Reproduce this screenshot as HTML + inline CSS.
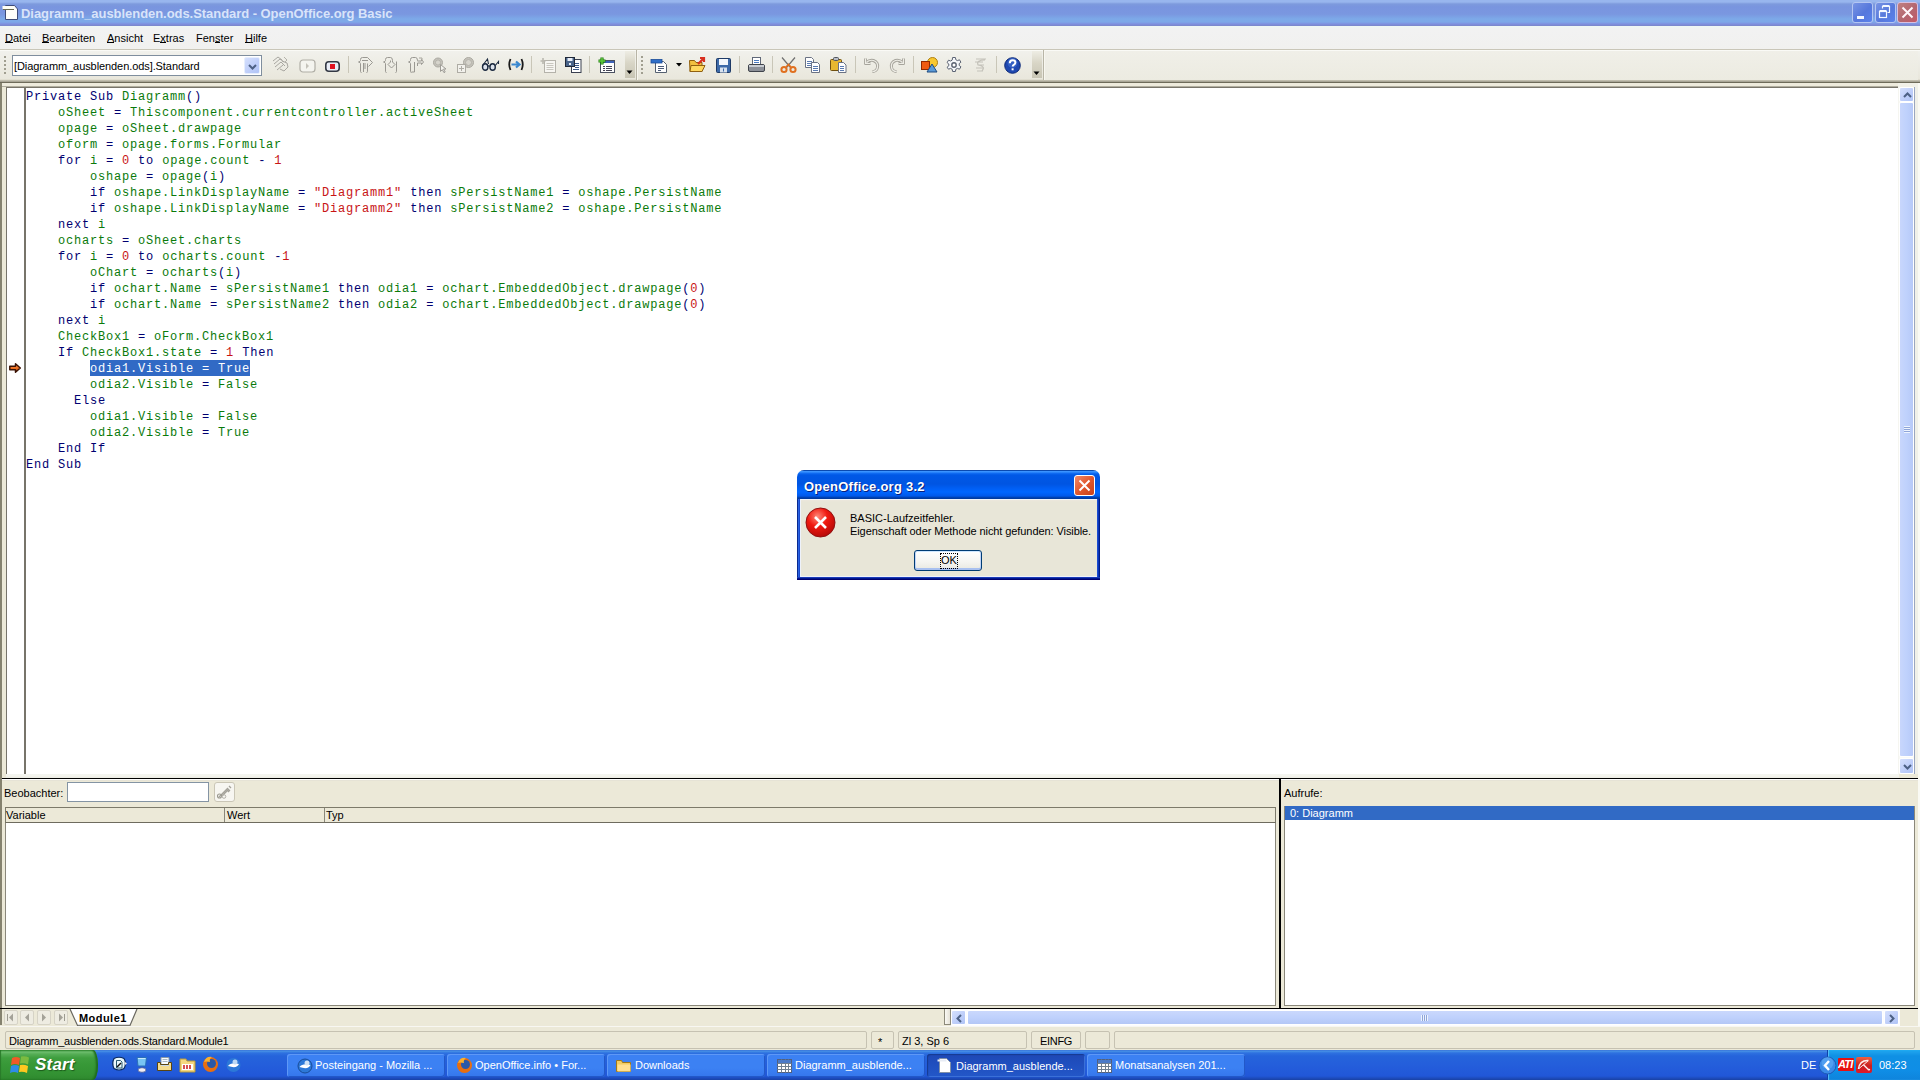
<!DOCTYPE html>
<html><head><meta charset="utf-8"><style>
*{margin:0;padding:0;box-sizing:border-box}
html,body{width:1920px;height:1080px;overflow:hidden}
body{position:relative;background:#ECE9D8;font-family:"Liberation Sans",sans-serif;font-size:11px;color:#000}
.a{position:absolute}
.t{position:absolute;white-space:pre;line-height:13px}
svg{position:absolute;overflow:visible}
u{text-decoration:none;position:relative}u::after{content:"";position:absolute;left:0;right:0;bottom:1px;height:1px;background:#000}
/* title bar */
#title{left:0;top:0;width:1920px;height:26px;background:linear-gradient(#98B6EE 0px,#98B6EE 2px,#7D9ADD 4px,#7995DF 7px,#7A97E0 14px,#7DA9E8 19px,#7DA8E8 22px,#7F90E0 24px,#7B86C8 26px)}
.wb{top:2px;width:21px;height:21px;border:1px solid #B4C6F2;border-radius:3px;background:linear-gradient(135deg,#7894E4,#5678DC 55%,#5A82EC)}
#menu{left:0;top:26px;width:1920px;height:24px;background:linear-gradient(#EEF8F4 0px,#F2F2F2 3px,#F1F1EF 23px);border-bottom:1px solid #C9C6B8}
#tb{left:0;top:50px;width:1920px;height:33px;background:linear-gradient(#FAFAF6 0px,#FAFAF6 1px,#F1F1EC 1px,#EDECE4 15px,#E9E7DC 29px,#D8D5C5 30px,#A9A697 31px,#A9A697 32px);border-bottom:1px solid #6E6B5A}
/* editor */
#ed{left:0;top:83px;width:1920px;height:695px;background:linear-gradient(#EEEBDD 3px,#B0AD9E 3px,#B0AD9E 4px,#ECE9D8 4px);border-left:2px solid #85826F}
#gut{left:6px;top:87px;width:20px;height:687px;background:#fff;border:1px solid #77746A;border-right:2px solid #77746A;border-bottom:none}
#code{left:26px;top:87px;width:1872px;height:687px;background:#fff;border-top:1px solid #77746A}
.code{font-family:"Liberation Mono",monospace;font-size:12px;letter-spacing:0.8px;line-height:16px;white-space:pre;position:absolute;left:26px;top:89px;color:#0A7A0A}
.k{color:#000070}.n{color:#C81414}
.hl{background:#316AC5;color:#fff;display:inline-block;height:16px;vertical-align:top;margin-top:-1px;padding-top:1px}
/* scrollbars */
.sbtn{border:1px solid #fff;border-radius:2px;background:linear-gradient(135deg,#D5E0FD,#BDCDF9 60%,#B0C4F6)}
.thumb{border:1px solid #fff;border-radius:2px;background:linear-gradient(90deg,#C8D6FC,#BFD1FC 50%,#B7C9F7)}
#hline1{left:0;top:778px;width:1918px;height:1px;background:#000}
#vline{left:1279px;top:778px;width:2px;height:231px;background:#000}
#hline2{left:0;top:1008px;width:1918px;height:1px;background:#000}
.hdr{background:#ECE9D8;border:1px solid #7D7A6A;border-bottom-color:#6E6B5E}
.sf{top:1031px;height:18px;border:1px solid #C6C2B2;border-radius:2px;background:#ECE9D8}
#taskbar{left:0;top:1050px;width:1920px;height:30px;background:linear-gradient(#3168D5 0px,#4993E6 1px,#2E71E0 3px,#2564DB 6px,#245EDB 15px,#2157D8 26px,#1941A5 30px)}
.tk{top:1054px;width:158px;height:23px;border-radius:3px;background:linear-gradient(#3C81F3,#3C81F3 60%,#3576EC);box-shadow:inset 1px 1px 0 #5E98F7,inset -1px -1px 0 #2258C8}
.tkt{color:#fff;top:1059px}
</style></head><body>
<!-- TITLE -->
<div id="title" class="a"></div>
<svg style="left:2px;top:4px" width="17" height="17" viewBox="0 0 17 17"><path d="M3.5 1.5h9l3 3.5v10.5h-12z" fill="#FEFEFA" stroke="#3E4C78" stroke-width="1"/><rect x="0.5" y="2" width="11" height="3" fill="#FFFFF4"/><path d="M1 5.5h11" stroke="#6A6A50" stroke-width="1"/></svg>
<div class="t" style="left:21px;top:6px;font-weight:bold;font-size:13px;line-height:16px;color:#D8E4FA;letter-spacing:-0.05px">Diagramm_ausblenden.ods.Standard - OpenOffice.org Basic</div>
<div class="a wb" style="left:1852px"><div class="a" style="left:4px;top:13px;width:7px;height:3px;background:#F4F8FF"></div></div>
<div class="a wb" style="left:1875px"><svg style="left:0;top:0" width="19" height="19"><path d="M6.5 5.5v-2h7v6h-2" stroke="#F4F8FF" stroke-width="1.2" fill="none"/><path d="M6.5 3h7" stroke="#F4F8FF" stroke-width="2"/><rect x="3.5" y="8.5" width="7" height="6" stroke="#F4F8FF" stroke-width="1.2" fill="none"/><path d="M3.5 8h7" stroke="#F4F8FF" stroke-width="2"/></svg></div>
<div class="a wb" style="left:1897px;background:linear-gradient(135deg,#C08080,#B46670 55%,#C45A68);border-color:#D8C0E0"><svg style="left:0;top:0" width="19" height="19"><path d="M4.5 4.5l10 10M14.5 4.5l-10 10" stroke="#FFF4F8" stroke-width="2"/></svg></div>

<!-- MENU -->
<div id="menu" class="a"></div>
<div class="t" style="left:5px;top:32px"><u>D</u>atei</div>
<div class="t" style="left:42px;top:32px"><u>B</u>earbeiten</div>
<div class="t" style="left:107px;top:32px"><u>A</u>nsicht</div>
<div class="t" style="left:153px;top:32px">E<u>x</u>tras</div>
<div class="t" style="left:196px;top:32px">Fen<u>s</u>ter</div>
<div class="t" style="left:245px;top:32px"><u>H</u>ilfe</div>

<!-- TOOLBAR -->
<div id="tb" class="a"></div>
<!-- grip 1 -->
<div class="a" style="left:4px;top:56px;width:2px;height:19px;background:repeating-linear-gradient(#A09E90 0 2px,transparent 2px 4px)"></div>
<!-- combobox -->
<div class="a" style="left:12px;top:55px;width:250px;height:21px;background:#fff;border:1px solid #7F8E9E"></div>
<div class="t" style="left:14px;top:60px;letter-spacing:-0.08px">[Diagramm_ausblenden.ods].Standard</div>
<div class="a sbtn" style="left:244px;top:57px;width:16px;height:17px;border-color:#E6EEFD"><svg style="left:3px;top:6px" width="9" height="6"><path d="M1 1L4.5 4.5L8 1" stroke="#4D6185" stroke-width="2" fill="none"/></svg></div>
<!-- compile disabled -->
<svg style="left:272px;top:56px" width="18" height="16" viewBox="0 0 18 16"><path d="M1 5l5-4 4 3M2 8l6-5 4 3M3 11l6-5 4 4M5 14l6-5M10 5l5 2 1 4-4 4-4-2" stroke="#A8A6A0" stroke-width="1" fill="none"/><path d="M12 1l3 3-2 2" stroke="#B4B2AA" fill="none"/></svg>
<!-- run disabled -->
<svg style="left:299px;top:59px" width="17" height="14" viewBox="0 0 17 14"><rect x="1" y="1" width="15" height="12" rx="3" fill="#F4F4EF" stroke="#B0AEA6" stroke-width="1.2"/><path d="M7 4v6l3-3z" fill="#C4C2BA"/></svg>
<!-- stop -->
<svg style="left:325px;top:61px" width="15" height="11" viewBox="0 0 15 11"><rect x="0.8" y="0.8" width="13.4" height="9.4" rx="3" fill="#E8ECF6" stroke="#333844" stroke-width="1.6"/><rect x="5" y="3" width="5" height="5" fill="#E01020"/></svg>
<div class="a" style="left:348px;top:56px;width:1px;height:17px;background:#C9C6B8"></div>
<!-- step over -->
<svg style="left:357px;top:57px" width="17" height="16" viewBox="0 0 17 16"><path d="M4.5 15.5q-1 0-1-1v-8q0-1-2-1.5q2-.5 2-1.5v-1q0-2 2-2h5l5 5-4 4M5 3.5h6M9.5 15.5q1 0 1-1v-8M6.5 6v9M8 6v6" stroke="#9A9892" stroke-width="1" fill="none"/></svg>
<!-- step into -->
<svg style="left:383px;top:57px" width="15" height="16" viewBox="0 0 15 16"><path d="M3.5 15.5q-1 0-1-1v-8q0-1-2-1.5q2-.5 2-1.5v-1q0-2 2-2h3q2 0 2 3v1.5l2.5 2.5-3.5 3.5-3.5-3.5 2.5-2.5V3.5M12.5 15.5q1 0 1-1v-10" stroke="#9A9892" stroke-width="1" fill="none"/></svg>
<!-- step out -->
<svg style="left:408px;top:57px" width="16" height="16" viewBox="0 0 16 16"><path d="M3.5 15.5q-1 0-1-1v-8q0-1-2-1.5q2-.5 2-1.5v-1q0-2 2-2h3q2 0 2 3v.5h4v-1.5l2 2.5-2 2.5v-1.5h-4M6.5 5v10h-3M9.5 6v3" stroke="#9A9892" stroke-width="1" fill="none"/><path d="M11 1h3v3" stroke="#A8A69E" fill="none"/></svg>
<!-- breakpoint -->
<svg style="left:433px;top:57px" width="16" height="16" viewBox="0 0 16 16"><circle cx="5" cy="5.5" r="4.5" fill="#C6C4BC" stroke="#ABA9A1"/><circle cx="5" cy="5.5" r="2.6" fill="#D6D4CC" stroke="#B4B2AA"/><path d="M7.5 7.5v7l1.8-1.8 1.7 3 1.2-.7-1.7-3h2.5z" fill="#F4F3EE" stroke="#9E9C96" stroke-width="1" stroke-linejoin="round"/></svg>
<!-- manage breakpoints -->
<svg style="left:457px;top:57px" width="17" height="17" viewBox="0 0 17 17"><circle cx="11.5" cy="5.5" r="5" fill="#C6C4BC" stroke="#ABA9A1"/><circle cx="11.5" cy="5.5" r="3" fill="#D6D4CC" stroke="#B4B2AA"/><rect x="0.5" y="7.5" width="8" height="8" fill="#F2F1EC" stroke="#AEACA4"/><path d="M4.5 9v5M2 11.5h5" stroke="#AEACA4"/></svg>
<!-- watch glasses -->
<svg style="left:481px;top:58px" width="18" height="13" viewBox="0 0 18 13"><ellipse cx="4.2" cy="9" rx="2.7" ry="3.2" fill="#DCE2EC" stroke="#1C2A40" stroke-width="1.4"/><ellipse cx="11.6" cy="9" rx="2.7" ry="3.2" fill="#DCE2EC" stroke="#1C2A40" stroke-width="1.4"/><path d="M6.9 8.5q1-1.2 2 0M1.6 7.5L6.5 1l1 5M14.3 7.5L17.5 3.5v2.5" stroke="#1C2A40" stroke-width="1.1" fill="none"/></svg>
<!-- object catalog -->
<svg style="left:507px;top:58px" width="18" height="13" viewBox="0 0 18 13"><path d="M3.5 1Q1 6.5 3.5 12M14.5 1Q17 6.5 14.5 12" stroke="#1A1A1A" stroke-width="1.8" fill="none"/><path d="M4.5 6.5h7M9 3.5l3.5 3-3.5 3" stroke="#3A88D0" stroke-width="2.2" fill="none"/></svg>
<div class="a" style="left:531px;top:56px;width:1px;height:17px;background:#C9C6B8"></div>
<!-- disabled insert doc -->
<svg style="left:540px;top:57px" width="17" height="16" viewBox="0 0 17 16"><rect x="4.5" y="3.5" width="11" height="12" fill="#F7F6F2" stroke="#B4B2AA"/><path d="M6.5 6.5h7M6.5 8.5h7M6.5 10.5h7M6.5 12.5h7" stroke="#C8C6BE"/><path d="M3 1v6M0.5 4h5" stroke="#BAB8B0" stroke-width="1.6"/></svg>
<!-- save module -->
<svg style="left:565px;top:57px" width="17" height="16" viewBox="0 0 17 16"><rect x="6.5" y="2.5" width="9.5" height="13" fill="#fff" stroke="#3A4050"/><path d="M10 6.5h4M10 8.5h4M10 10.5h4M8 12.5h6" stroke="#3A5888"/><rect x="0.5" y="0.5" width="9" height="9" fill="#49648A" stroke="#202838"/><rect x="2.5" y="1" width="5" height="3" fill="#E8EEF8"/><rect x="4" y="6" width="2" height="2" fill="#E8EEF8"/></svg>
<div class="a" style="left:589px;top:56px;width:1px;height:17px;background:#C9C6B8"></div>
<!-- new dialog -->
<svg style="left:598px;top:57px" width="17" height="16" viewBox="0 0 17 16"><rect x="2.5" y="3.5" width="14" height="12" fill="#fff" stroke="#4A5060"/><rect x="3" y="4" width="13" height="2" fill="#3E62B8"/><path d="M5 9.5h2M8 9.5h6M5 11.5h2M8 11.5h6M5 13.5h2M8 13.5h6" stroke="#445" stroke-width="1"/><path d="M4 0.5v7M0.5 4h7" stroke="#1F7A0F" stroke-width="3.2"/><path d="M4 1v6M1 4h6" stroke="#5CC83A" stroke-width="1.6"/></svg>
<!-- overflow 1 -->
<div class="a" style="left:625px;top:51px;width:10px;height:27px;background:linear-gradient(#EEEDE4 0%,#D8D5C6 45%,#C8C5B4 100%)"></div>
<svg style="left:626px;top:70px" width="8" height="5"><path d="M0.5 0.5h6l-3 3.5z" fill="#000"/></svg>
<div class="a" style="left:636px;top:50px;width:1px;height:30px;background:#B8B5A6"></div>
<div class="a" style="left:637px;top:50px;width:1px;height:30px;background:#F8F7F0"></div>
<!-- grip 2 -->
<div class="a" style="left:641px;top:56px;width:2px;height:19px;background:repeating-linear-gradient(#A09E90 0 2px,transparent 2px 4px)"></div>
<!-- new doc -->
<svg style="left:651px;top:57px" width="18" height="16" viewBox="0 0 18 16"><path d="M4.5 4.5h8l3 3v8h-11z" fill="#fff" stroke="#556070"/><path d="M7 9.5h6M7 11.5h6M7 13.5h3" stroke="#4A5A78"/><rect x="0" y="2.5" width="11" height="3.5" fill="#2F6EC8" stroke="#1A4C9A" stroke-width="0.8"/></svg>
<svg style="left:676px;top:63px" width="6" height="4"><path d="M0 0h6l-3 3.5z" fill="#000"/></svg>
<!-- open -->
<svg style="left:689px;top:57px" width="18" height="16" viewBox="0 0 18 16"><path d="M0.5 3.5h5l1.5 2h6v9h-12z" fill="#F2C040" stroke="#906010"/><path d="M2 8.5h14l-3 6h-12z" fill="#FFD860" stroke="#906010"/><path d="M9 7l6-6M11 1h4v4" stroke="#D83020" stroke-width="2.2" fill="none"/></svg>
<!-- save -->
<svg style="left:716px;top:58px" width="15" height="15" viewBox="0 0 15 15"><rect x="0.5" y="0.5" width="14" height="14" rx="1" fill="#3D6AA8" stroke="#1E3A66"/><rect x="3" y="1" width="9" height="6" fill="#F4F8FC"/><rect x="4" y="9.5" width="7" height="5" fill="#D8E2EE"/><rect x="7" y="10.5" width="1" height="3" fill="#3D6AA8"/></svg>
<div class="a" style="left:739px;top:56px;width:1px;height:17px;background:#C9C6B8"></div>
<!-- print -->
<svg style="left:748px;top:57px" width="17" height="16" viewBox="0 0 17 16"><rect x="4.5" y="0.5" width="8" height="7" fill="#fff" stroke="#606878"/><path d="M6 3.5h5M6 5.5h5" stroke="#4A7AC0"/><rect x="0.5" y="7.5" width="16" height="7" rx="1.5" fill="#8C9098" stroke="#40444C"/><rect x="1" y="8" width="15" height="2" fill="#C8CCD2"/></svg>
<div class="a" style="left:772px;top:56px;width:1px;height:17px;background:#C9C6B8"></div>
<!-- cut -->
<svg style="left:780px;top:57px" width="17" height="16" viewBox="0 0 17 16"><path d="M2 0.5l8.5 10M15 0.5l-8.5 10" stroke="#707070" stroke-width="1.2"/><circle cx="4" cy="12.5" r="2.6" fill="none" stroke="#E07020" stroke-width="2"/><circle cx="13" cy="12.5" r="2.6" fill="none" stroke="#E07020" stroke-width="2"/><path d="M6 10l2.5-2.5 2.5 2.5" stroke="#E07020" stroke-width="1.6" fill="none"/></svg>
<!-- copy -->
<svg style="left:805px;top:57px" width="16" height="16" viewBox="0 0 16 16"><path d="M0.5 0.5h6l2 2v8h-8z" fill="#fff" stroke="#6A7284"/><path d="M2 4.5h5M2 6.5h5M2 8.5h5" stroke="#5A7AB0"/><path d="M6.5 5.5h6l2 2v8h-8z" fill="#fff" stroke="#6A7284"/><path d="M8 9.5h5M8 11.5h5M8 13.5h5" stroke="#5A7AB0"/></svg>
<!-- paste -->
<svg style="left:830px;top:57px" width="17" height="16" viewBox="0 0 17 16"><rect x="0.5" y="2.5" width="11" height="11" rx="1" fill="#E8B830" stroke="#705010"/><rect x="3.5" y="0.5" width="5" height="3" rx="1" fill="#B8BCC4" stroke="#505660"/><path d="M8.5 5.5h5l2.5 2.5v7.5h-7.5z" fill="#fff" stroke="#6A7284"/><path d="M10 9.5h4M10 11.5h4M10 13.5h4" stroke="#5A7AB0"/></svg>
<div class="a" style="left:855px;top:56px;width:1px;height:17px;background:#C9C6B8"></div>
<!-- undo disabled -->
<svg style="left:864px;top:57px" width="16" height="16" viewBox="0 0 16 16"><path d="M1.5 1.5v5h5M2.5 5.5q3-3 7-2q5 2 4 7q-1 4-5 4" stroke="#A6A49C" stroke-width="3" fill="none" stroke-linejoin="round"/><path d="M1.5 1.5v5h5M2.5 5.5q3-3 7-2q5 2 4 7q-1 4-5 4" stroke="#EEEDE6" stroke-width="1.2" fill="none" stroke-linejoin="round"/></svg>
<!-- redo disabled -->
<svg style="left:889px;top:57px" width="16" height="16" viewBox="0 0 16 16"><path d="M14.5 1.5v5h-5M13.5 5.5q-3-3-7-2q-5 2-4 7q1 4 5 4" stroke="#A6A49C" stroke-width="3" fill="none" stroke-linejoin="round"/><path d="M14.5 1.5v5h-5M13.5 5.5q-3-3-7-2q-5 2-4 7q1 4 5 4" stroke="#EEEDE6" stroke-width="1.2" fill="none" stroke-linejoin="round"/></svg>
<div class="a" style="left:913px;top:56px;width:1px;height:17px;background:#C9C6B8"></div>
<!-- shapes -->
<svg style="left:921px;top:57px" width="18" height="16" viewBox="0 0 18 16"><circle cx="11.5" cy="5.5" r="5" fill="#F8C830" stroke="#B08010"/><rect x="0.5" y="4.5" width="8" height="8" fill="#F05A10" stroke="#902A00"/><path d="M11 7l5 8h-10z" fill="#5A9AD8" stroke="#1E4A80"/></svg>
<!-- gear -->
<svg style="left:946px;top:57px" width="16" height="16" viewBox="0 0 16 16"><path d="M6.6 0.5h2.8l.4 2.2 1.6.9 2.1-.8 1.4 2.4-1.7 1.4v1.8l1.7 1.4-1.4 2.4-2.1-.8-1.6.9-.4 2.2H6.6l-.4-2.2-1.6-.9-2.1.8L1.1 10.2l1.7-1.4V7L1.1 5.6l1.4-2.4 2.1.8 1.6-.9z" fill="#F4F6FA" stroke="#5A6272"/><circle cx="8" cy="8" r="2.2" fill="#fff" stroke="#5A6272" stroke-width="1.4"/></svg>
<!-- disabled S -->
<svg style="left:972px;top:57px" width="16" height="16" viewBox="0 0 16 16"><path d="M4 2h10M3 5h8M6 8h6M4 11h8M5 14h6M13 3q-9 0-7 5q8 1 4 6" stroke="#C4C2BA" stroke-width="1.2" fill="none"/></svg>
<div class="a" style="left:996px;top:56px;width:1px;height:17px;background:#C9C6B8"></div>
<!-- help -->
<svg style="left:1004px;top:57px" width="17" height="17" viewBox="0 0 17 17"><circle cx="8.5" cy="8.5" r="7.8" fill="#1F48B0" stroke="#0E2A78"/><circle cx="8.5" cy="6" r="5" fill="#4A78D8" opacity=".5"/><path d="M5.8 6.2q0-3 2.8-3q2.8 0 2.8 2.4q0 1.4-1.6 2.2q-1.1.6-1.1 1.8" stroke="#fff" stroke-width="2" fill="none"/><rect x="7.6" y="11.3" width="2" height="2" fill="#fff"/></svg>
<!-- overflow 2 -->
<div class="a" style="left:1032px;top:51px;width:10px;height:27px;background:linear-gradient(#EEEDE4 0%,#D8D5C6 45%,#C8C5B4 100%)"></div>
<svg style="left:1033px;top:71px" width="8" height="5"><path d="M0.5 0.5h6l-3 3.5z" fill="#000"/></svg>
<div class="a" style="left:1043px;top:50px;width:1px;height:30px;background:#B8B5A6"></div>
<div class="a" style="left:1044px;top:50px;width:1px;height:30px;background:#F8F7F0"></div>
<div class="a" style="left:1045px;top:51px;width:873px;height:29px;background:linear-gradient(#F0EFE8,#ECEBE1)"></div>


<!-- EDITOR -->
<div id="ed" class="a"></div>
<div id="gut" class="a"></div>
<div id="code" class="a"></div>
<div class="code"><span class="k">Private Sub </span>Diagramm<span class="k">()</span>
    oSheet <span class="k">=</span> Thiscomponent.currentcontroller.activeSheet
    opage <span class="k">=</span> oSheet.drawpage
    oform <span class="k">=</span> opage.forms.Formular
    <span class="k">for</span> i <span class="k">=</span> <span class="n">0</span> <span class="k">to</span> opage.count <span class="k">-</span> <span class="n">1</span>
        oshape <span class="k">=</span> opage<span class="k">(</span>i<span class="k">)</span>
        <span class="k">if</span> oshape.LinkDisplayName <span class="k">=</span> <span class="n">"Diagramm1"</span> <span class="k">then</span> sPersistName1 <span class="k">=</span> oshape.PersistName
        <span class="k">if</span> oshape.LinkDisplayName <span class="k">=</span> <span class="n">"Diagramm2"</span> <span class="k">then</span> sPersistName2 <span class="k">=</span> oshape.PersistName
    <span class="k">next</span> i
    ocharts <span class="k">=</span> oSheet.charts
    <span class="k">for</span> i <span class="k">=</span> <span class="n">0</span> <span class="k">to</span> ocharts.count <span class="k">-</span><span class="n">1</span>
        oChart <span class="k">=</span> ocharts<span class="k">(</span>i<span class="k">)</span>
        <span class="k">if</span> ochart.Name <span class="k">=</span> sPersistName1 <span class="k">then</span> odia1 <span class="k">=</span> ochart.EmbeddedObject.drawpage<span class="k">(</span><span class="n">0</span><span class="k">)</span>
        <span class="k">if</span> ochart.Name <span class="k">=</span> sPersistName2 <span class="k">then</span> odia2 <span class="k">=</span> ochart.EmbeddedObject.drawpage<span class="k">(</span><span class="n">0</span><span class="k">)</span>
    <span class="k">next</span> i
    CheckBox1 <span class="k">=</span> oForm.CheckBox1
    <span class="k">If</span> CheckBox1.state <span class="k">=</span> <span class="n">1</span> <span class="k">Then</span>
        <span class="hl">odia1.Visible = True</span>
        odia2.Visible <span class="k">=</span> False
      <span class="k">Else</span>
        odia1.Visible <span class="k">=</span> False
        odia2.Visible <span class="k">=</span> True
    <span class="k">End If</span>
<span class="k">End Sub</span></div>
<!-- breakpoint arrow -->
<svg style="left:8px;top:362px" width="14" height="12" viewBox="0 0 14 12"><defs><linearGradient id="ag" x1="0" y1="0" x2="0" y2="1"><stop offset="0" stop-color="#FFB070"/><stop offset="0.5" stop-color="#F07020"/><stop offset="1" stop-color="#C04808"/></linearGradient></defs><path d="M1.8 4.3h5.7V1.8l4.8 4.2-4.8 4.2V7.7H1.8z" fill="url(#ag)" stroke="#3A1204" stroke-width="1.5" stroke-linejoin="round"/></svg>
<!-- vertical scrollbar -->
<div class="a" style="left:1898px;top:83px;width:20px;height:691px;background:linear-gradient(90deg,#F4F4EE,#FBFBF7 2px,#FBFBF7 16px,#9AA6BE 16px,#9AA6BE 17px,#F0F0E8 17px)"></div><div class="a" style="left:1898px;top:83px;width:20px;height:4px;background:#F2F1E8"></div>
<div class="a" style="left:1918px;top:83px;width:2px;height:967px;background:#FAFAF4"></div>
<div class="a sbtn" style="left:1899px;top:87px;width:15px;height:15px"><svg style="left:3px;top:4px" width="9" height="6"><path d="M1 5L4.5 1.5L8 5" stroke="#4D6185" stroke-width="2" fill="none"/></svg></div>
<div class="a thumb" style="left:1899px;top:102px;width:15px;height:655px"><div class="a" style="left:4px;top:323px;width:6px;height:7px;background:repeating-linear-gradient(#EEF4FE 0 1px,#8FA5D8 1px 2px)"></div></div>
<div class="a sbtn" style="left:1899px;top:758px;width:15px;height:16px"><svg style="left:3px;top:5px" width="9" height="6"><path d="M1 1L4.5 4.5L8 1" stroke="#4D6185" stroke-width="2" fill="none"/></svg></div>

<!-- BOTTOM PANELS -->
<div class="a" style="left:6px;top:774px;width:1893px;height:4px;background:linear-gradient(#FBFCF8,#ECEDE6 1px,#FCFCF6 2px,#E6E6DE 3px,#F6F6EE 4px)"></div>
<div class="a" style="left:0;top:779px;width:1918px;height:2px;background:linear-gradient(#FFFFFF 1px,#E6E3D6 1px)"></div>
<div id="hline1" class="a"></div>
<div class="a" style="left:0;top:778px;width:2px;height:247px;background:#85826F"></div>
<div class="t" style="left:4px;top:787px">Beobachter:</div>
<div class="a" style="left:67px;top:782px;width:142px;height:20px;background:#fff;border:1px solid #8494A4"></div>
<div class="a" style="left:214px;top:782px;width:21px;height:20px;border:1px solid #CAC6B6;border-radius:3px;background:#F7F6F1"></div>
<svg style="left:216px;top:784px" width="17" height="16" viewBox="0 0 17 16"><path d="M3 13l9-9M6 12l7-7M13 2l2 2M14 6l-2 2" stroke="#A4A29A" stroke-width="1.3" fill="none"/><circle cx="3.5" cy="12" r="2" fill="none" stroke="#9A988E" stroke-width="1.1"/><circle cx="8" cy="12.5" r="1.8" fill="none" stroke="#B4B2AA" stroke-width="1"/></svg>
<div class="a hdr" style="left:5px;top:807px;width:1271px;height:16px"></div>
<div class="a" style="left:224px;top:808px;width:1px;height:14px;background:#8A877A"></div>
<div class="a" style="left:324px;top:808px;width:1px;height:14px;background:#8A877A"></div>
<div class="t" style="left:6px;top:809px">Variable</div>
<div class="t" style="left:227px;top:809px">Wert</div>
<div class="t" style="left:326px;top:809px">Typ</div>
<div class="a" style="left:5px;top:823px;width:1271px;height:183px;background:#fff;border-left:1px solid #8A877A;border-right:1px solid #8A877A;border-bottom:1px solid #8A877A"></div>

<div id="vline" class="a"></div>
<div class="t" style="left:1284px;top:787px">Aufrufe:</div>
<div class="a" style="left:1284px;top:806px;width:631px;height:200px;background:#fff;border:1px solid #8A877A;border-top:none"></div>
<div class="a" style="left:1285px;top:806px;width:629px;height:14px;background:#316AC5"></div>
<div class="t" style="left:1290px;top:807px;color:#fff">0: Diagramm</div>

<div id="hline2" class="a"></div>
<!-- tab bar -->
<div class="a" style="left:4px;top:1010px;width:14px;height:15px;border:1px solid #D6D3C6;border-radius:2px;background:#EEECE2"></div>
<div class="a" style="left:20px;top:1010px;width:14px;height:15px;border:1px solid #D6D3C6;border-radius:2px;background:#EEECE2"></div>
<div class="a" style="left:37px;top:1010px;width:14px;height:15px;border:1px solid #D6D3C6;border-radius:2px;background:#EEECE2"></div>
<div class="a" style="left:54px;top:1010px;width:14px;height:15px;border:1px solid #D6D3C6;border-radius:2px;background:#EEECE2"></div>
<svg style="left:0px;top:1005px" width="70" height="25"><path d="M7.5 9v7M64.5 9v7" stroke="#9C9A90"/><path d="M13 8.5v8l-4-4z" fill="#A4A298"/><path d="M29 8.5v8l-4-4z" fill="#A4A298"/><path d="M42 8.5v8l4-4z" fill="#A4A298"/><path d="M59 8.5v8l4-4z" fill="#A4A298"/></svg>
<svg style="left:69px;top:1008px" width="70" height="19"><path d="M1 1L8.5 17.5H61L68 1" fill="#FFFFFF" stroke="#6A6860" stroke-width="1.2"/><path d="M9 17.5H61" stroke="#7C7A70" stroke-width="1.5"/></svg>
<div class="t" style="left:79px;top:1012px;font-weight:bold;letter-spacing:0.45px">Module1</div>
<!-- splitter + h scrollbar -->
<div class="a" style="left:944px;top:1009px;width:7px;height:16px;border:1px solid #8C897A;border-top:none;background:linear-gradient(90deg,#FAF9F4,#E4E1D6)"></div>
<div class="a" style="left:951px;top:1009px;width:967px;height:17px;background:#FCFCFE"></div>
<div class="a sbtn" style="left:951px;top:1010px;width:15px;height:15px"><svg style="left:4px;top:3px" width="6" height="9"><path d="M5 1L1.5 4.5L5 8" stroke="#4D6185" stroke-width="2" fill="none"/></svg></div>
<div class="a thumb" style="left:967px;top:1010px;width:916px;height:15px;background:linear-gradient(#CAD8FC,#BFD1FC 50%,#B4C7F6)"><div class="a" style="left:453px;top:4px;width:7px;height:6px;background:repeating-linear-gradient(90deg,#EEF4FE 0 1px,#8FA5D8 1px 2px)"></div></div>
<div class="a sbtn" style="left:1884px;top:1010px;width:15px;height:15px"><svg style="left:4px;top:3px" width="6" height="9"><path d="M1 1L4.5 4.5L1 8" stroke="#4D6185" stroke-width="2" fill="none"/></svg></div>
<div class="a" style="left:1900px;top:1009px;width:18px;height:17px;background:#ECE9D8"></div>
<!-- status bar -->
<div class="a" style="left:0;top:1026px;width:1920px;height:24px;background:#ECE9D8;border-top:1px solid #F8F7F2"></div>
<div class="a sf" style="left:5px;width:862px"></div>
<div class="a sf" style="left:871px;width:23px"></div>
<div class="a sf" style="left:898px;width:129px"></div>
<div class="a sf" style="left:1031px;width:50px"></div>
<div class="a sf" style="left:1085px;width:25px"></div>
<div class="a sf" style="left:1114px;width:801px"></div>
<div class="t" style="left:9px;top:1035px;letter-spacing:-0.2px">Diagramm_ausblenden.ods.Standard.Module1</div>
<div class="t" style="left:878px;top:1036px">*</div>
<div class="t" style="left:902px;top:1035px">Zl 3, Sp 6</div>
<div class="t" style="left:1040px;top:1035px;letter-spacing:-0.3px">EINFG</div>

<!--STATUS-->
<div id="taskbar" class="a"></div>
<!-- start -->
<div class="a" style="left:0;top:1050px;width:98px;height:30px;border-radius:0 5px 5px 0/0 15px 15px 0;background:linear-gradient(#3A963A 0px,#6EBE6E 2px,#56AE56 4px,#3E9E3E 8px,#379837 15px,#339233 24px,#2E882E 30px);box-shadow:inset -2px 0 2px #1E6A1E,inset 1px 0 1px #2A7A2A"></div>
<svg style="left:10px;top:1056px" width="20" height="18" viewBox="0 0 20 18"><path d="M2 2q4-2 8 0l-1 7q-4-2-8 0z" fill="#F05A28"/><path d="M11 0.5q4-1 8 1l-1 7q-4-2-8-1z" fill="#7CBB40"/><path d="M1 10q4-2 8 0l-1 7q-4-2-8 0z" fill="#2E8CE8"/><path d="M10 9q4-1 8 1l-1 7q-4-2-8-1z" fill="#FFC820"/></svg>
<div class="t" style="left:35px;top:1055px;font-size:17px;line-height:20px;font-weight:bold;font-style:italic;color:#fff;letter-spacing:0.2px;text-shadow:1px 1px 1px #1C5A1C">Start</div>
<!-- quick launch -->
<svg style="left:111px;top:1056px" width="17" height="17" viewBox="0 0 17 17"><path d="M3 2.5q5-2.5 10 0q3 5 0 10q-5 3-10 0q-2.5-5 0-10z" fill="#EAF8FC" stroke="#0A2A60" stroke-width="1.2"/><path d="M5.5 4.5h4l1.5 1.5v6h-5.5z" fill="none" stroke="#2A5A70"/><path d="M6 11l4-4" stroke="#101010" stroke-width="1.4"/><path d="M14 6l2 1.5-2 1.5" fill="#F4E8E8"/></svg>
<svg style="left:136px;top:1056px" width="12" height="17" viewBox="0 0 12 17"><path d="M1 1.5h9.5l-1 8.5h-7.5z" fill="#78C4F4" stroke="#2A70B8" stroke-width="1"/><path d="M2 2.5h7.5" stroke="#C8E8FC"/><ellipse cx="6" cy="14" rx="4" ry="2.3" fill="#F2EEF4" stroke="#4A5A90" stroke-width="0.8"/></svg>
<svg style="left:156px;top:1056px" width="17" height="17" viewBox="0 0 17 17"><path d="M5 1.5h8v7h-8z" fill="#F8FCFF" stroke="#8A9AAA"/><path d="M6.5 3.5h5M6.5 5.5h5" stroke="#A8B8C8"/><path d="M1.5 6.5h3v2h8v-2h3v8h-14z" fill="#F4DC90" stroke="#5A4410" stroke-width="1"/><path d="M5 9.5h8" stroke="#C8D8E8"/></svg>
<svg style="left:179px;top:1057px" width="17" height="16" viewBox="0 0 17 16"><path d="M1 2h6l1 2h8v11H1z" fill="#F4D880" stroke="#B89838"/><rect x="3" y="7" width="11" height="6" fill="#fff"/><path d="M4 8h2v4H4zM7 8h2v4H7zM10 8h2v4h-2z" fill="#D85050"/></svg>
<svg style="left:202px;top:1056px" width="17" height="17" viewBox="0 0 17 17"><circle cx="8.5" cy="8.5" r="7.5" fill="#E86E10"/><circle cx="9.5" cy="7.5" r="4.5" fill="#2A58A8"/><path d="M2 6q2-6 8-5q-3 2-2 5q-4-1-6 0z" fill="#F8B030"/></svg>
<svg style="left:225px;top:1057px" width="17" height="16" viewBox="0 0 17 16"><circle cx="8.5" cy="8" r="7" fill="#2C78D8"/><path d="M3 9q3-4 11-2q-2 5-11 2z" fill="#fff"/><circle cx="10" cy="5" r="2.5" fill="#BCD8F4"/></svg>
<!-- taskbar buttons -->
<div class="a tk" style="left:287px"></div>
<div class="a tk" style="left:447px"></div>
<div class="a tk" style="left:607px"></div>
<div class="a tk" style="left:767px"></div>
<div class="a tk" style="left:927px;background:linear-gradient(#1E48B4,#1F4EBE 40%,#2357C8);box-shadow:inset 1px 1px 1px #163A90,inset -1px -1px 0 #3A70D8"></div>
<div class="a tk" style="left:1087px"></div>
<svg style="left:297px;top:1058px" width="16" height="16" viewBox="0 0 16 16"><circle cx="8" cy="8" r="7" fill="#2C78D8" stroke="#184C98"/><path d="M2.5 9q3-4 11-2q-2 5-11 2z" fill="#fff"/><circle cx="10" cy="5" r="2.5" fill="#CFE2F6"/></svg>
<div class="t tkt" style="left:315px">Posteingang - Mozilla ...</div>
<svg style="left:456px;top:1057px" width="17" height="17" viewBox="0 0 17 17"><circle cx="8.5" cy="8.5" r="7.5" fill="#E86E10"/><circle cx="9.5" cy="7.5" r="4.5" fill="#2A58A8"/><path d="M2 6q2-6 8-5q-3 2-2 5q-4-1-6 0z" fill="#F8B030"/></svg>
<div class="t tkt" style="left:475px">OpenOffice.info • For...</div>
<svg style="left:616px;top:1058px" width="16" height="14" viewBox="0 0 16 14"><path d="M0.5 2.5h5l1 2h8v9h-14z" fill="#F2CC60" stroke="#A07818"/><path d="M1.5 6.5h13v7h-13z" fill="#FFE090"/></svg>
<div class="t tkt" style="left:635px">Downloads</div>
<svg style="left:777px;top:1057px" width="15" height="16" viewBox="0 0 15 16"><rect x="0.5" y="2.5" width="14" height="13" fill="#fff" stroke="#506080"/><path d="M0.5 6.5h14M0.5 9.5h14M0.5 12.5h14M4.5 2.5v13M8.5 2.5v13M11.5 2.5v13" stroke="#708090"/><rect x="1" y="3" width="13" height="3" fill="#4A7AC8"/></svg>
<div class="t tkt" style="left:795px">Diagramm_ausblende...</div>
<svg style="left:937px;top:1057px" width="15" height="16" viewBox="0 0 15 16"><path d="M2.5 1.5h7l4 4v10h-11z" fill="#fff" stroke="#8090A8"/><path d="M0.5 3.5h9" stroke="#E8ECF4" stroke-width="2"/></svg>
<div class="t tkt" style="left:956px;top:1060px">Diagramm_ausblende...</div>
<svg style="left:1097px;top:1057px" width="15" height="16" viewBox="0 0 15 16"><rect x="0.5" y="2.5" width="14" height="13" fill="#fff" stroke="#506080"/><path d="M0.5 6.5h14M0.5 9.5h14M0.5 12.5h14M4.5 2.5v13M8.5 2.5v13M11.5 2.5v13" stroke="#708090"/><rect x="1" y="3" width="13" height="3" fill="#4A7AC8"/></svg>
<div class="t tkt" style="left:1115px">Monatsanalysen 201...</div>
<!-- tray -->
<div class="t" style="left:1801px;top:1059px;color:#fff">DE</div>
<div class="a" style="left:1827px;top:1050px;width:93px;height:30px;background:linear-gradient(#18A8F0 0px,#1CA0EC 2px,#0F90E4 6px,#0F8EE6 20px,#0E84DC 30px);border-left:1px solid #1042A8;box-shadow:inset 1px 0 1px #5CC0F8"></div>
<svg style="left:1818px;top:1056px" width="19" height="19" viewBox="0 0 19 19"><circle cx="9.5" cy="9.5" r="8.5" fill="#3A8AE8" stroke="#1C5AB8"/><circle cx="9.5" cy="7" r="6" fill="#6AB4F8" opacity=".5"/><path d="M11 5l-4 4.5 4 4.5" stroke="#fff" stroke-width="2.4" fill="none"/></svg>
<div class="a" style="left:1838px;top:1058px;width:16px;height:13px;background:#E81010;border-radius:1px"></div>
<div class="t" style="left:1838px;top:1058px;font-weight:bold;font-style:italic;font-size:11px;color:#fff;letter-spacing:-0.8px">ATI</div>
<div class="a" style="left:1856px;top:1057px;width:16px;height:16px;background:linear-gradient(#F06040,#C82020 55%,#E01828);border-radius:2px"></div>
<svg style="left:1856px;top:1057px" width="16" height="16" viewBox="0 0 16 16"><path d="M2.5 12Q3.5 3 12.5 3.5" stroke="#FFF0F0" stroke-width="1.5" fill="none"/><path d="M3 11.5L12 4" stroke="#FFE8E8" stroke-width="1" fill="none"/><path d="M7.5 7.8L12.3 12.6q1 .8 1.2-.8" stroke="#FFF0F0" stroke-width="1.4" fill="none"/></svg>
<div class="t" style="left:1879px;top:1059px;color:#fff">08:23</div>

<!-- dialog -->
<div class="a" style="left:797px;top:470px;width:303px;height:110px;border-radius:7px 7px 0 0;background:linear-gradient(#0A4AB0 0px,#0A4AB0 1px,#3A93FF 1px,#3A93FF 2px,#1470F4 3px,#0058E6 5px,#0055E2 14px,#0060F6 19px,#0066FF 22px,#0058EA 26px,#003AA0 28px,#003AA0 29px);"></div>
<div class="a" style="left:797px;top:499px;width:303px;height:81px;background:linear-gradient(90deg,#0A2A90 1px,#2A64E0 1px,#2A64E0 2px,#1A4AD0 2px,#1A4AD0 3px,transparent 3px,transparent 300px,#1A4AD0 300px,#1A4AD0 301px,#0A36B8 301px,#0A36B8 302px,#001C88 302px)"></div>
<div class="a" style="left:800px;top:499px;width:297px;height:78px;background:linear-gradient(#F0F4FC 1px,#ECE7DC 1px,#E8E6D8 3px);box-shadow:inset 1px 0 0 #EEF2FA,inset 0 -1px 0 #EEF2FA"></div>
<div class="a" style="left:797px;top:577px;width:303px;height:3px;background:linear-gradient(#1A3AB8 1px,#00188C 1px,#00188C 2px,#000070 2px)"></div>
<div class="t" style="left:804px;top:479px;font-weight:bold;font-size:13px;line-height:16px;color:#fff;letter-spacing:0.25px;text-shadow:1px 1px 0 #0A1F7A">OpenOffice.org 3.2</div>
<div class="a" style="left:1074px;top:475px;width:21px;height:21px;border:1px solid #fff;border-radius:3px;background:linear-gradient(135deg,#F08A6A,#E2582E 50%,#C8401A)"></div>
<svg style="left:1077px;top:478px" width="15" height="15"><path d="M2.5 2.5l10 10M12.5 2.5l-10 10" stroke="#fff" stroke-width="2"/></svg>
<!-- error icon -->
<svg style="left:805px;top:507px" width="31" height="31" viewBox="0 0 31 31"><defs><radialGradient id="eg" cx="0.4" cy="0.3" r="0.75"><stop offset="0" stop-color="#FF8A7A"/><stop offset="0.45" stop-color="#F01A10"/><stop offset="1" stop-color="#B00808"/></radialGradient></defs><circle cx="15.5" cy="15.5" r="14.5" fill="url(#eg)" stroke="#901010" stroke-width="1"/><path d="M10 10l11 11M21 10l-11 11" stroke="#fff" stroke-width="2.6"/></svg>
<div class="t" style="left:850px;top:512px">BASIC-Laufzeitfehler.</div>
<div class="t" style="left:850px;top:525px;letter-spacing:-0.08px">Eigenschaft oder Methode nicht gefunden: Visible.</div>
<!-- OK button -->
<div class="a" style="left:914px;top:550px;width:68px;height:21px;border:1px solid #003C74;border-radius:3px;background:linear-gradient(#FFFFFF,#F4F4F0 60%,#E8E8E0);box-shadow:inset 0 -2px 0 #A8C0F0,inset 0 1px 0 #CEE7FF,inset 1px 0 0 #C0D4F8,inset -1px 0 0 #C0D4F8"></div>
<div class="a" style="left:940px;top:553px;width:18px;height:16px;border:1px dotted #000"></div>
<div class="t" style="left:941px;top:554px">OK</div>

</body></html>
